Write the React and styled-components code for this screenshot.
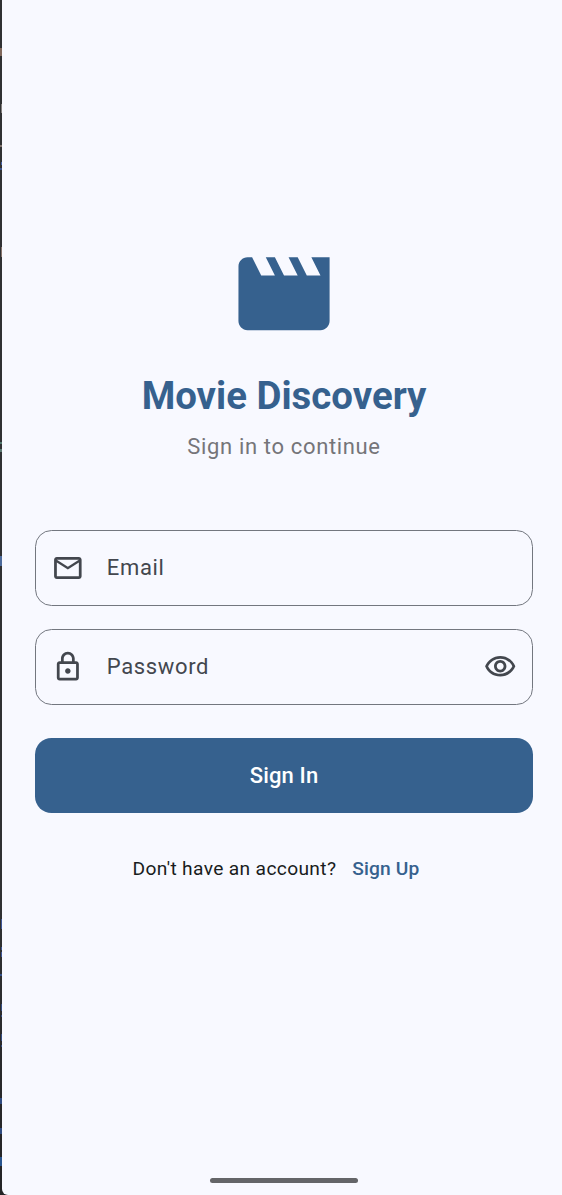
import React from 'react';
import styled, { createGlobalStyle } from 'styled-components';

const GlobalStyle = createGlobalStyle`
  *, *::before, *::after { box-sizing: border-box; }
  html, body { margin: 0; padding: 0; overflow: hidden; background: #303133; }
  body { font-family: Roboto, "Liberation Sans", sans-serif; }
`;

const Desktop = styled.div`
  position: relative;
  width: 562px;
  height: 1195px;
  overflow: hidden;
  padding-left: 2px;
  background: linear-gradient(#303133, #303133 75%, #242426);
`;

const CodeMark = styled.i`
  position: absolute;
  left: ${(p) => 2 - p.$w}px;
  top: ${(p) => p.$top}px;
  width: ${(p) => p.$w}px;
  height: ${(p) => p.$h}px;
  background: ${(p) => p.$color};
`;

const Screen = styled.main`
  display: flex;
  flex-direction: column;
  align-items: center;
  width: 564px;
  height: 1195px;
  padding: 239px 33px 0;
  background: #f8f9ff;
  border-bottom-left-radius: 6px;
`;

const Glyph = styled.svg`
  display: block;
  flex: none;
  width: ${(p) => p.$size}px;
  height: ${(p) => p.$size}px;
  fill: currentColor;
`;

const Brand = styled.header`
  display: flex;
  flex-direction: column;
  align-items: center;
  color: #36618e;
`;

const Title = styled.h1`
  margin: 23px 0 0;
  font-size: 38.4px;
  line-height: 49.4px;
  font-weight: 700;
  white-space: nowrap;
`;

const Subtitle = styled.p`
  margin: 9px 0 0;
  font-size: 22px;
  line-height: 33px;
  letter-spacing: 0.65px;
  color: #757579;
`;

const Form = styled.form`
  display: flex;
  flex-direction: column;
  width: 498px;
  margin-top: 67.1px;
`;

const Field = styled.label`
  display: flex;
  align-items: center;
  height: 76px;
  margin-bottom: 22.8px;
  padding: 0 15.4px 0 15.4px;
  border: 1px solid #73777f;
  border-radius: 16.5px;
  color: #43474e;
  font-size: 22px;
  letter-spacing: 0.65px;
`;

const FieldText = styled.span`
  flex: 1;
  margin-left: 22.4px;
`;

const SubmitButton = styled.button`
  height: 75.2px;
  margin: 10.2px 0 0;
  padding: 0;
  border: 0;
  border-radius: 16.5px;
  background: #36618e;
  color: #fff;
  font: 500 22px Roboto, sans-serif;
  letter-spacing: 0.14px;
`;

const SignUpRow = styled.div`
  display: flex;
  align-items: center;
  margin-top: 39px;
  margin-right: 16px;
  height: 33px;
  font-size: 19.2px;
  letter-spacing: 0.34px;
  color: #191c20;
  white-space: nowrap;
`;

const SignUpLink = styled.a`
  margin-left: 16px;
  color: #36618e;
  font-weight: 500;
  letter-spacing: 0.14px;
`;

const HomeIndicator = styled.div`
  width: 148px;
  height: 5.4px;
  margin-top: auto;
  margin-bottom: 11.6px;
  border-radius: 3px;
  background: #646568;
`;

const paths = {
  movie:
    'M18 4l2 4h-3l-2-4h-2l2 4h-3l-2-4H8l2 4H7L5 4H4c-1.1 0-1.99.9-1.99 2L2 18c0 1.1.9 2 2 2h16c1.1 0 2-.9 2-2V4h-4z',
  mail:
    'M22 6c0-1.1-.9-2-2-2H4c-1.1 0-2 .9-2 2v12c0 1.1.9 2 2 2h16c1.1 0 2-.9 2-2V6zm-2 0l-8 5-8-5h16zm0 12H4V8l8 5 8-5v10z',
  lock:
    'M18 8h-1V6c0-2.76-2.24-5-5-5S7 3.24 7 6v2H6c-1.1 0-2 .9-2 2v10c0 1.1.9 2 2 2h12c1.1 0 2-.9 2-2V10c0-1.1-.9-2-2-2zM9 6c0-1.66 1.34-3 3-3s3 1.34 3 3v2H9V6zm9 14H6V10h12v10zm-6-3c1.1 0 2-.9 2-2s-.9-2-2-2-2 .9-2 2 .9 2 2 2z',
  eye:
    'M12 6c3.79 0 7.17 2.13 8.82 5.5C19.17 14.87 15.79 17 12 17s-7.17-2.13-8.82-5.5C4.83 8.13 8.21 6 12 6m0-2C7 4 2.73 7.11 1 11.5 2.73 15.89 7 19 12 19s9.27-3.11 11-7.5C21.27 7.11 17 4 12 4zm0 5c1.38 0 2.5 1.12 2.5 2.5S13.38 14 12 14s-2.5-1.12-2.5-2.5S10.62 9 12 9m0-2c-2.48 0-4.5 2.02-4.5 4.5S9.52 16 12 16s4.5-2.02 4.5-4.5S14.48 7 12 7z',
};

const Icon = ({ name, size = 33, viewBox = '0 0 24 24' }) => (
  <Glyph viewBox={viewBox} $size={size} aria-hidden="true">
    <path d={paths[name]} />
  </Glyph>
);

// Slivers of the editor's code visible beside the emulator window: [top, height, width, colour]
const codeMarks = [
  [48, 8, 2, '#80685c'],
  [104, 9, 1, '#85807e'],
  [145, 2, 2, '#80736d'],
  [162, 3, 1, '#445fa5'],
  [168, 2, 2, '#3c528c'],
  [247, 10, 1, '#85736b'],
  [442, 2, 2, '#527970'],
  [449, 3, 2, '#5e7c75'],
  [556, 10, 2, '#4c6a9b'],
  [919, 10, 1, '#3d5596'],
  [947, 3, 1, '#3d5596'],
  [952, 5, 1, '#3d5596'],
  [974, 2, 2, '#34508a'],
  [1004, 7, 1, '#344d82'],
  [1015, 2, 1, '#344d82'],
  [1034, 7, 1, '#344d82'],
  [1045, 2, 1, '#344d82'],
  [1098, 6, 2, '#304b80'],
  [1128, 6, 2, '#304b80'],
  [1157, 9, 2, '#28548e'],
];

export default function App() {
  return (
    <>
      <GlobalStyle />
      <Desktop>
        {codeMarks.map(([top, h, w, color]) => (
          <CodeMark key={top} $top={top} $h={h} $w={w} $color={color} />
        ))}
        <Screen>
          <Brand>
            <Icon name="movie" size={109.4} viewBox="-0.07 0 24 24" />
            <Title>Movie Discovery</Title>
            <Subtitle>Sign in to continue</Subtitle>
          </Brand>
          <Form>
            <Field>
              <Icon name="mail" viewBox="-0.25 -0.4 24 24" />
              <FieldText>Email</FieldText>
            </Field>
            <Field>
              <Icon name="lock" viewBox="-0.25 -0.2 24 24" />
              <FieldText>Password</FieldText>
              <Icon name="eye" viewBox="0.2 -0.3 24 24" />
            </Field>
            <SubmitButton type="button">Sign In</SubmitButton>
          </Form>
          <SignUpRow>
            Don't have an account?
            <SignUpLink>Sign Up</SignUpLink>
          </SignUpRow>
          <HomeIndicator />
        </Screen>
      </Desktop>
    </>
  );
}
